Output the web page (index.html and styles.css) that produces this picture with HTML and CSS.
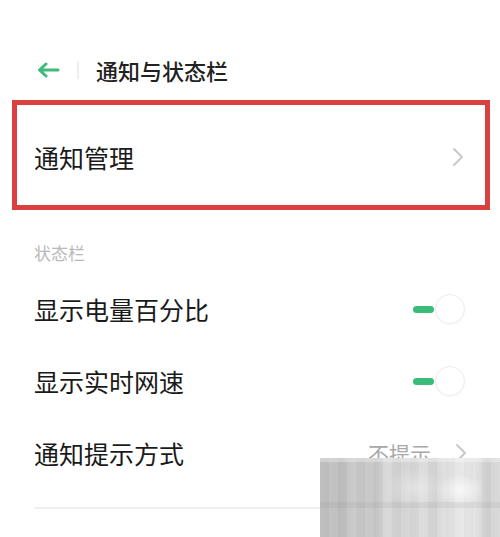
FILE: index.html
```html
<!DOCTYPE html>
<html lang="zh-CN">
<head>
<meta charset="utf-8">
<title>通知与状态栏</title>
<link rel="stylesheet" href="styles.css">
</head>
<body>
<div class="screen">
  <header class="topbar">
    <svg class="back" width="24" height="16" viewBox="0 0 24 16" aria-hidden="true">
      <path d="M22 8 H4 M10 2 L3.5 8 L10 14" fill="none" stroke="#3dbb7b" stroke-width="3" stroke-linecap="round" stroke-linejoin="round"/>
    </svg>
    <span class="sep"></span>
    <h1 class="title">通知与状态栏</h1>
  </header>

  <div class="highlight">
    <div class="row row-box">
      <span class="label">通知管理</span>
      <svg class="chev" width="12" height="20" viewBox="0 0 12 20" aria-hidden="true">
        <path d="M2 2 L10 10 L2 18" fill="none" stroke="#c9c9c9" stroke-width="2" stroke-linecap="round" stroke-linejoin="round"/>
      </svg>
    </div>
  </div>

  <div class="section-title">状态栏</div>

  <div class="row">
    <span class="label">显示电量百分比</span>
    <span class="toggle"><span class="bar"></span><span class="knob"></span></span>
  </div>
  <div class="row">
    <span class="label">显示实时网速</span>
    <span class="toggle"><span class="bar"></span><span class="knob"></span></span>
  </div>
  <div class="row">
    <span class="label">通知提示方式</span>
    <span class="value">不提示
      <svg class="chev" width="12" height="20" viewBox="0 0 12 20" aria-hidden="true">
        <path d="M2 2 L10 10 L2 18" fill="none" stroke="#c9c9c9" stroke-width="2" stroke-linecap="round" stroke-linejoin="round"/>
      </svg>
    </span>
  </div>
  <div class="divider"></div>

  <div class="mosaic"></div>
</div>
</body>
</html>
```

FILE: styles.css
```css
* { box-sizing: border-box; }
html, body { margin: 0; padding: 0; background: #fff; }
body {
  font-family: "Noto Sans CJK SC", "Noto Sans", sans-serif;
  color: #1e1e1e;
}
.screen {
  position: relative;
  width: 500px;
  height: 537px;
  overflow: hidden;
}
.topbar {
  display: flex;
  align-items: center;
  height: 50px;
  margin-top: 45px;
  padding-left: 36px;
}
.back { display: block; }
.sep {
  width: 2px;
  height: 18px;
  background: #eeeeee;
  margin-left: 17px;
}
.title {
  margin: 0 0 0 17px;
  font-size: 22px;
  font-weight: 500;
  color: #222;
  line-height: 30px;
}
.highlight {
  margin: 5px 10px 0 12px;
  height: 110px;
  border: 5px solid #d9403f;
  display: flex;
  align-items: center;
  padding-top: 4px;
}
.row {
  display: flex;
  align-items: center;
  justify-content: space-between;
  height: 72px;
  padding: 0 32px 0 34px;
}
.row-box {
  width: 100%;
  height: auto;
  padding: 0 21px 0 17px;
}
.label {
  font-size: 25px;
  line-height: 34px;
  color: #1a1a1a;
}
.chev { display: block; }
.section-title {
  margin: 31px 0 8px 34px;
  font-size: 17px;
  line-height: 24px;
  color: #b9b9b9;
}
.toggle {
  position: relative;
  display: flex;
  align-items: center;
  width: 52px;
  height: 30px;
  margin-right: 3px;
}
.bar {
  width: 21px;
  height: 7px;
  border-radius: 4px;
  background: #3cba78;
}
.knob {
  margin-left: 1px;
  width: 30px;
  height: 30px;
  border-radius: 50%;
  background: #fff;
  border: 1px solid #ededed;
  box-shadow: 0 1px 2px rgba(0,0,0,0.04);
}
.value {
  display: flex;
  align-items: center;
  gap: 24px;
  font-size: 21px;
  line-height: 30px;
  color: #a8a8a8;
  margin-right: 1px;
}
.divider {
  margin: 18px 0 0 34px;
  height: 2px;
  background: #f0f0f0;
}
.mosaic {
  position: absolute;
  left: 320px;
  top: 458px;
  width: 180px;
  height: 79px;
  background:
    linear-gradient(to bottom, rgba(255,255,255,0.3) 0 4px, transparent 4px 44px, rgba(120,120,120,0.1) 44px 50px, transparent 50px),
    radial-gradient(ellipse 24px 16px at 140px 32px, rgba(255,255,255,0.7), rgba(255,255,255,0) 100%),
    radial-gradient(ellipse 30px 20px at 95px 30px, rgba(255,255,255,0.35), rgba(255,255,255,0) 100%),
    repeating-linear-gradient(to right, rgba(0,0,0,0.025) 0 9px, rgba(255,255,255,0.04) 9px 18px),
    linear-gradient(to right, #c4c4c4 0, #bebebe 18px, #cacaca 36px, #c6c6c6 54px, #d8d8d8 66px, #d2d2d2 84px, #dcdcdc 100px, #d6d6d6 116px, #e4e4e4 130px, #e8e8e8 150px, #d2d2d2 168px, #d8d8d8 180px);
}
```
